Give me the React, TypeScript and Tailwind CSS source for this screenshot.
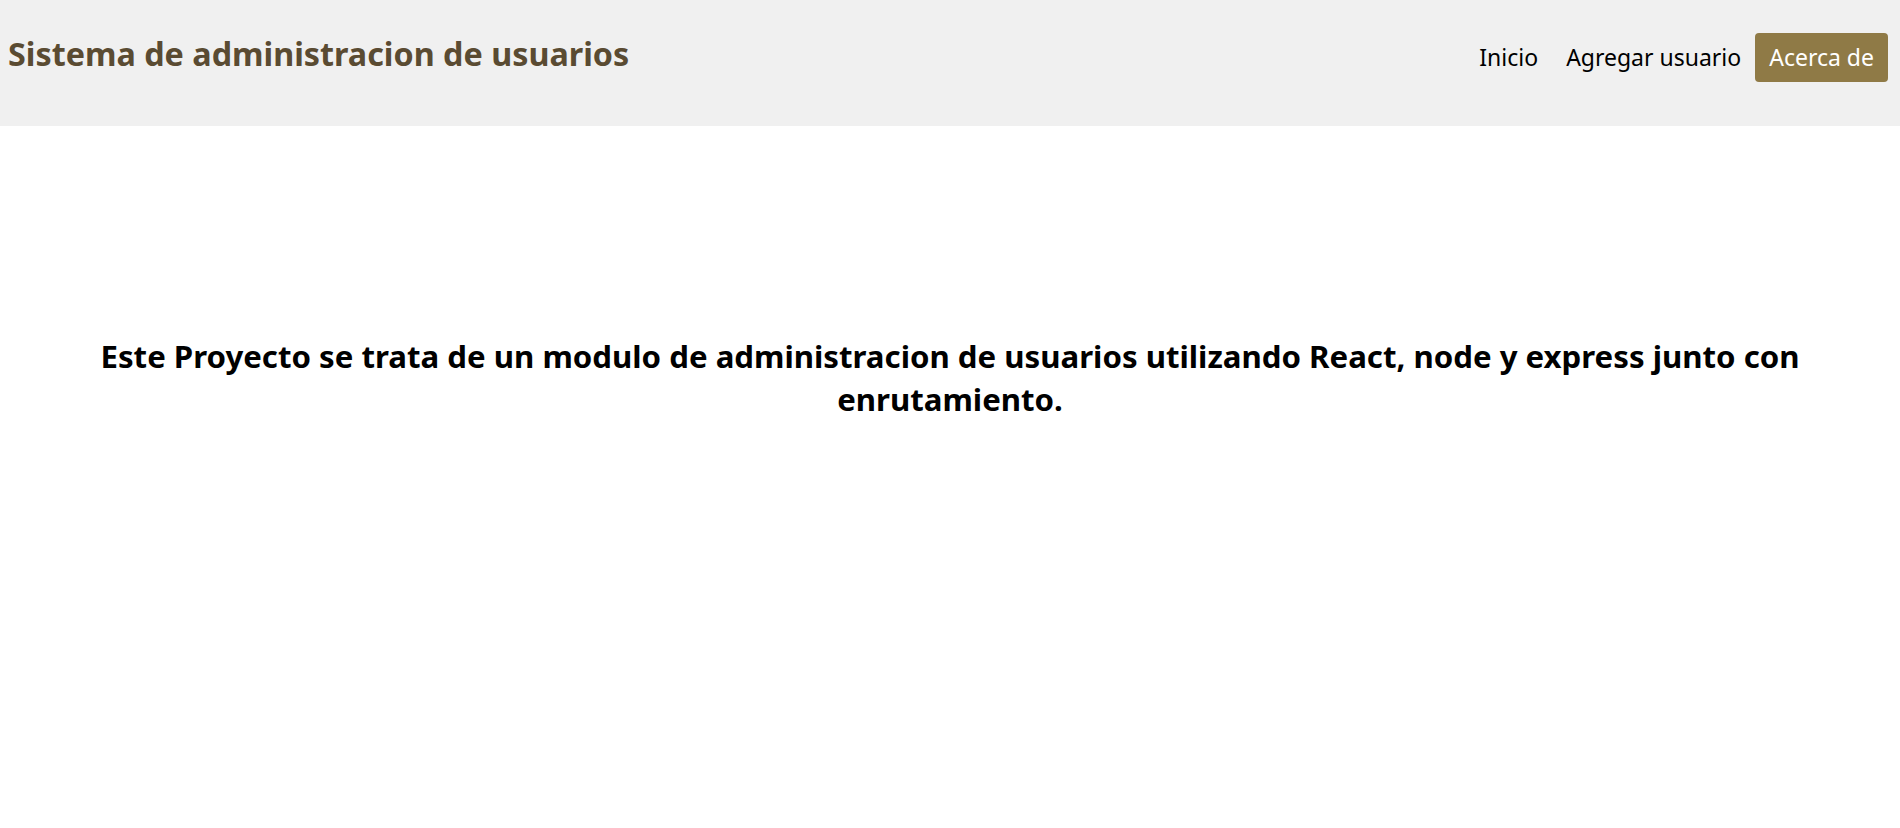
export default function App() {
  const font = { fontFamily: '"Noto Sans", "Open Sans", sans-serif' };
  return (
    <div style={font} className="min-h-screen bg-white text-black">
      <header className="flex h-[126px] items-start justify-between bg-[#f0f0f0] pl-2 pr-3">
        <h1 className="mt-[32px] text-[32.3px] font-bold leading-[43px] text-[#5a4b32]">
          Sistema de administracion de usuarios
        </h1>
        <nav className="mt-[33px] flex items-center text-[23px] leading-[29px]">
          <a className="px-[14px] py-[10px] text-black">Inicio</a>
          <a className="px-[14px] py-[10px] text-black">Agregar usuario</a>
          <a className="rounded-[4px] bg-[#8f7a46] px-[14px] py-[10px] text-white">Acerca de</a>
        </nav>
      </header>
      <main className="px-[96px] pt-[209px]">
        <h2 className="text-center text-[31.2px] font-bold leading-[43px]">
          Este Proyecto se trata de un modulo de administracion de usuarios utilizando React, node y express junto con enrutamiento.
        </h2>
      </main>
    </div>
  );
}
